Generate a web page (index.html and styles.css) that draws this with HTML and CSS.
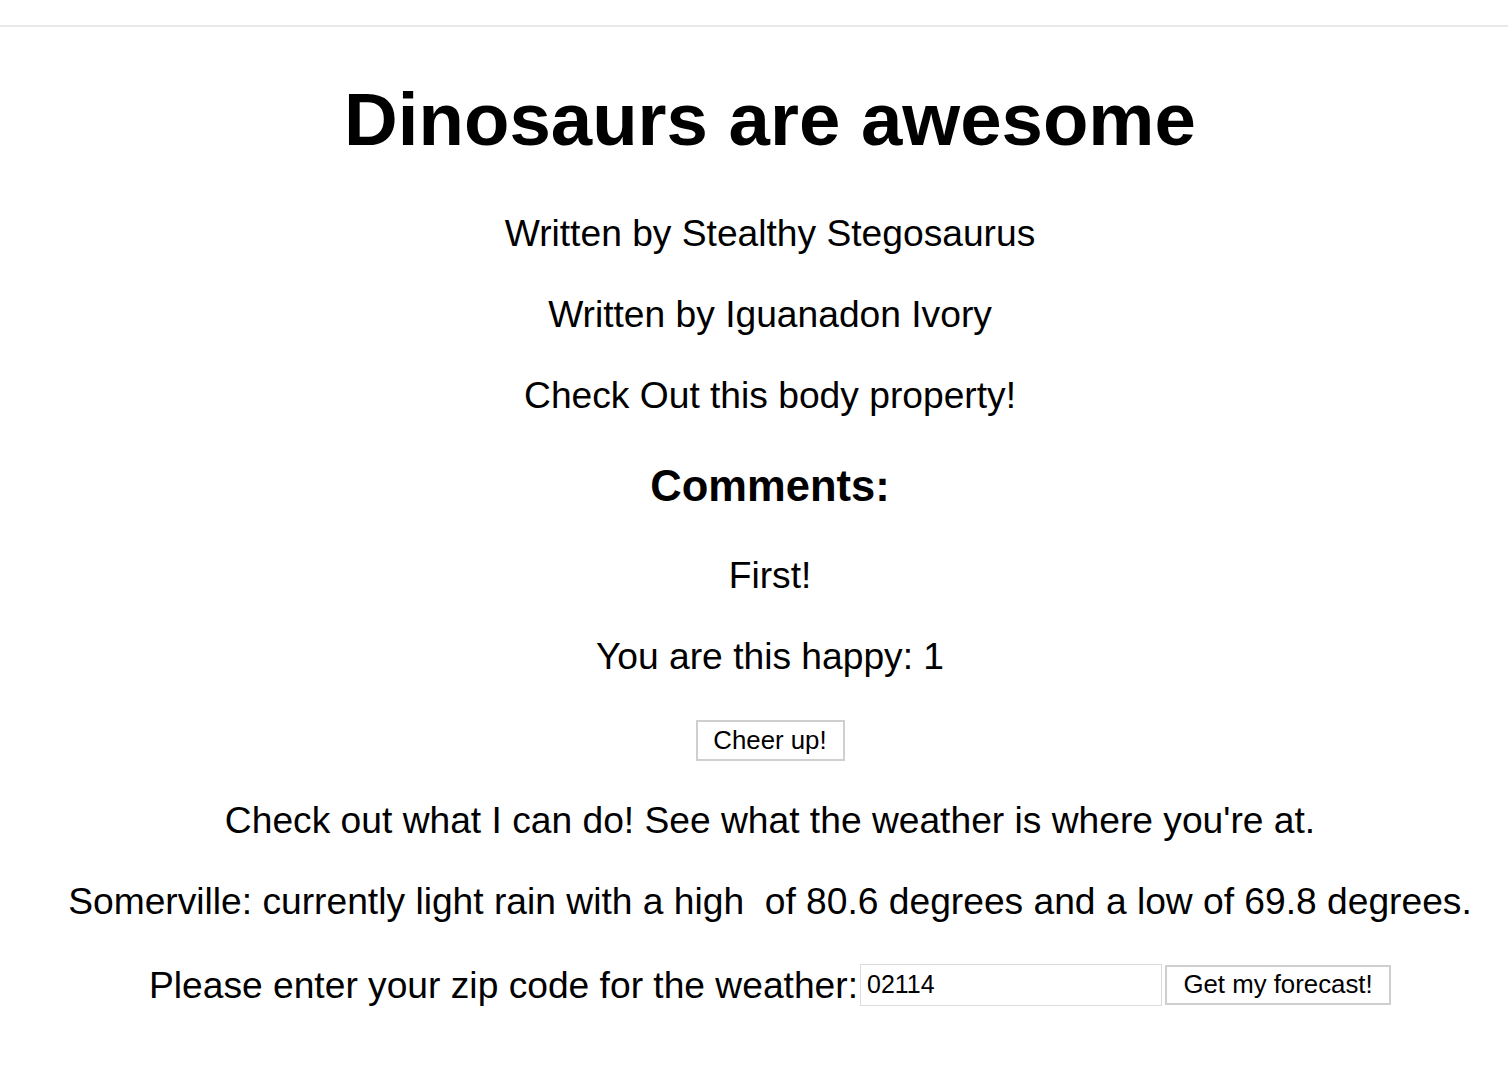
FILE: index.html
```html
<!DOCTYPE html>
<html>
<head>
<meta charset="utf-8">
<title>Dinosaurs are awesome</title>
<link rel="stylesheet" href="styles.css">
</head>
<body>
<div class="topbar"></div>
<main class="page">
  <h1 class="title">Dinosaurs are awesome</h1>
  <p class="line">Written by Stealthy Stegosaurus</p>
  <p class="line">Written by Iguanadon Ivory</p>
  <p class="line">Check Out this body property!</p>
  <h3 class="comments">Comments:</h3>
  <p class="line">First!</p>
  <p class="line">You are this happy: 1</p>
  <div class="cheer-row"><button class="btn cheer">Cheer up!</button></div>
  <p class="line">Check out what I can do! See what the weather is where you're at.</p>
  <p class="line">Somerville: currently light rain with a high &nbsp;of 80.6 degrees and a low of 69.8 degrees.</p>
  <p class="line zip"><span class="zip-label">Please enter your zip code for the weather:</span><input class="zip-input" type="text" value="02114"><button class="btn forecast">Get my forecast!</button></p>
</main>
</body>
</html>
```
FILE: styles.css
```css
html, body {
  margin: 0;
  padding: 0;
  background: #fff;
}
body {
  font-family: "Liberation Sans", Arial, Helvetica, sans-serif;
  color: #000;
}
.topbar {
  height: 25px;
  border-bottom: 2px solid #e8e8e8;
}
.page {
  padding-left: 32px;
  text-align: center;
  font-size: 37.2px;
}
.title {
  font-size: 74.4px;
  line-height: 85.5px;
  margin: 49.8px 0;
  font-weight: bold;
}
.line {
  font-size: 37.2px;
  line-height: 43px;
  margin: 38px 0;
}
.comments {
  font-size: 43.5px;
  line-height: 50px;
  margin: 43.5px 0;
  font-weight: bold;
}
.cheer-row {
  margin: 0;
  line-height: 41px;
  padding-top: 1px;
}
.btn {
  font-family: "Liberation Sans", Arial, Helvetica, sans-serif;
  font-size: 25.8px;
  color: #000;
  background: #fff;
  border: 2px solid #cfcfcf;
  border-radius: 0;
  vertical-align: middle;
  margin: 0;
}
.cheer {
  width: 149px;
  height: 41px;
  padding: 0;
}
.zip {
  white-space: nowrap;
}
.zip-label {
  vertical-align: middle;
}
.zip-input {
  font-family: "Liberation Sans", Arial, Helvetica, sans-serif;
  font-size: 25px;
  width: 302px;
  height: 42px;
  box-sizing: border-box;
  border: 1px solid #dcdcdc;
  padding: 0 6px;
  margin: 0 0 0 2px;
  vertical-align: middle;
  color: #000;
}
.forecast {
  width: 226px;
  height: 40px;
  padding: 0;
  margin-left: 3px;
}
```
